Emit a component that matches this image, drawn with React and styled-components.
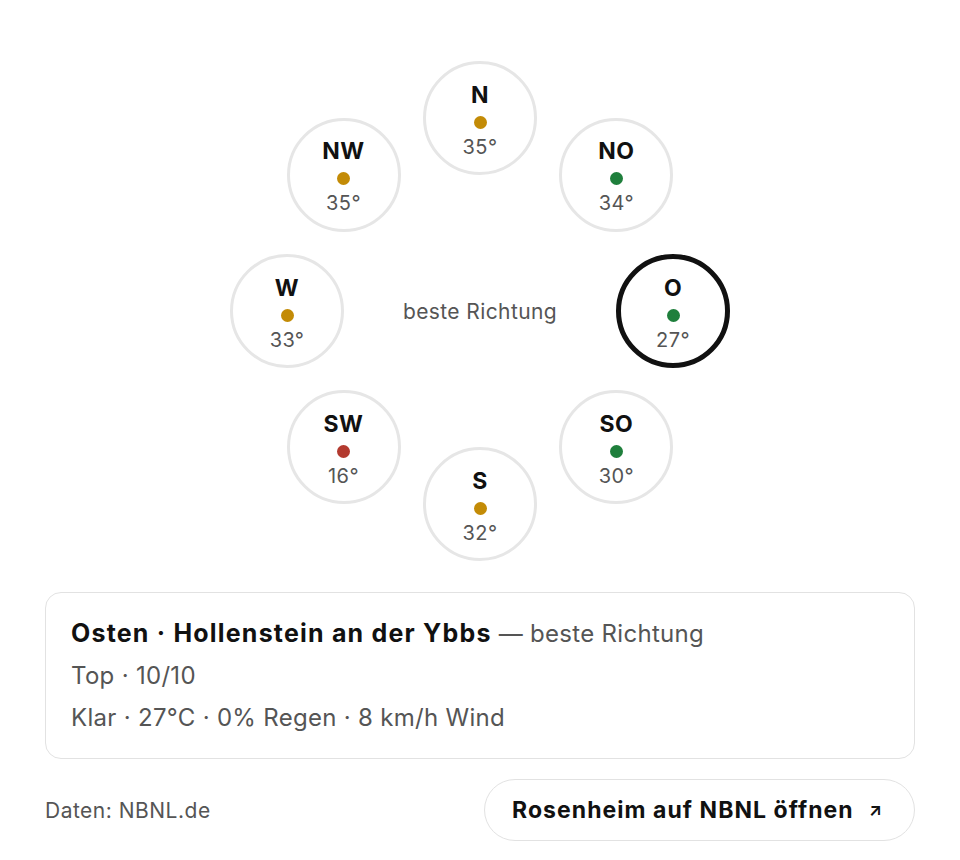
import React from 'react';
import styled, { createGlobalStyle } from 'styled-components';

const GlobalStyle = createGlobalStyle`
  body {
    margin: 0;
    background: #fff;
    font-family: Inter, "Noto Sans", "Liberation Sans", sans-serif;
    color: #111;
  }
`;

const Page = styled.div`
  width: 960px;
  padding-bottom: 18px;
`;

const Compass = styled.div`
  position: relative;
  width: 500px;
  height: 500px;
  margin: 61px auto 0;
`;

const CenterLabel = styled.div`
  position: absolute;
  inset: 0;
  display: flex;
  align-items: center;
  justify-content: center;
  font-size: 21px;
  letter-spacing: 0.4px;
  color: #555;
`;

const Node = styled.div`
  position: absolute;
  box-sizing: border-box;
  width: 114px;
  height: 114px;
  padding-top: 4px;
  border-radius: 50%;
  border: ${(p) => (p.$active ? '5px solid #111' : '3px solid #e6e6e6')};
  background: #fff;
  display: flex;
  flex-direction: column;
  align-items: center;
  justify-content: center;
`;

const Dir = styled.div`
  font-size: 23px;
  font-weight: 700;
  line-height: 26px;
  letter-spacing: 0.5px;
  color: #111;
`;

const Dot = styled.span`
  width: 13px;
  height: 13px;
  margin: 8px 0 6px;
  border-radius: 50%;
  background: ${(p) => p.$color};
`;

const Deg = styled.div`
  font-size: 20px;
  line-height: 24px;
  letter-spacing: 0.4px;
  color: #555;
`;

const Card = styled.div`
  margin: 31px 45px 0;
  padding: 19px 25px 19px;
  border: 1.5px solid #e2e2e2;
  border-radius: 16px;
`;

const Line = styled.div`
  font-size: 24px;
  line-height: 42px;
  letter-spacing: 0.3px;
  color: #555;
`;

const Strong = styled.span`
  font-size: 25px;
  font-weight: 700;
  letter-spacing: 1.2px;
  color: #111;
`;

const Footer = styled.div`
  display: flex;
  align-items: center;
  justify-content: space-between;
  margin: 20px 45px 0;
`;

const Source = styled.div`
  font-size: 21px;
  letter-spacing: 0.5px;
  color: #555;
`;

const OpenButton = styled.a`
  display: flex;
  align-items: center;
  gap: 15px;
  height: 62px;
  box-sizing: border-box;
  padding: 0 31px 0 27px;
  border: 1.5px solid #e2e2e2;
  border-radius: 31px;
  font-size: 23px;
  font-weight: 700;
  letter-spacing: 1.05px;
  color: #111;
  text-decoration: none;
`;

const Arrow = styled.span`
  font-size: 17px;
  font-weight: 700;
`;

const COLORS = { warm: '#c38b06', good: '#1f7f3c', bad: '#b33a2f' };

const directions = [
  { dir: 'N', deg: 35, tone: 'warm' },
  { dir: 'NO', deg: 34, tone: 'good' },
  { dir: 'O', deg: 27, tone: 'good', active: true },
  { dir: 'SO', deg: 30, tone: 'good' },
  { dir: 'S', deg: 32, tone: 'warm' },
  { dir: 'SW', deg: 16, tone: 'bad' },
  { dir: 'W', deg: 33, tone: 'warm' },
  { dir: 'NW', deg: 35, tone: 'warm' },
];

const RING = 193;
const SIZE = 114;

export default function App() {
  return (
    <Page>
      <GlobalStyle />
      <Compass>
        <CenterLabel>beste Richtung</CenterLabel>
        {directions.map((d, i) => {
          const a = (i * Math.PI) / 4;
          const x = 250 + RING * Math.sin(a) - SIZE / 2;
          const y = 250 - RING * Math.cos(a) - SIZE / 2;
          return (
            <Node key={d.dir} $active={d.active} style={{ left: x, top: y }}>
              <Dir>{d.dir}</Dir>
              <Dot $color={COLORS[d.tone]} />
              <Deg>{d.deg}°</Deg>
            </Node>
          );
        })}
      </Compass>
      <Card>
        <Line>
          <Strong>Osten · Hollenstein an der Ybbs</Strong> — beste Richtung
        </Line>
        <Line>Top · 10/10</Line>
        <Line>Klar · 27°C · 0% Regen · 8 km/h Wind</Line>
      </Card>
      <Footer>
        <Source>Daten: NBNL.de</Source>
        <OpenButton href="#">
          Rosenheim auf NBNL öffnen <Arrow>↗</Arrow>
        </OpenButton>
      </Footer>
    </Page>
  );
}
